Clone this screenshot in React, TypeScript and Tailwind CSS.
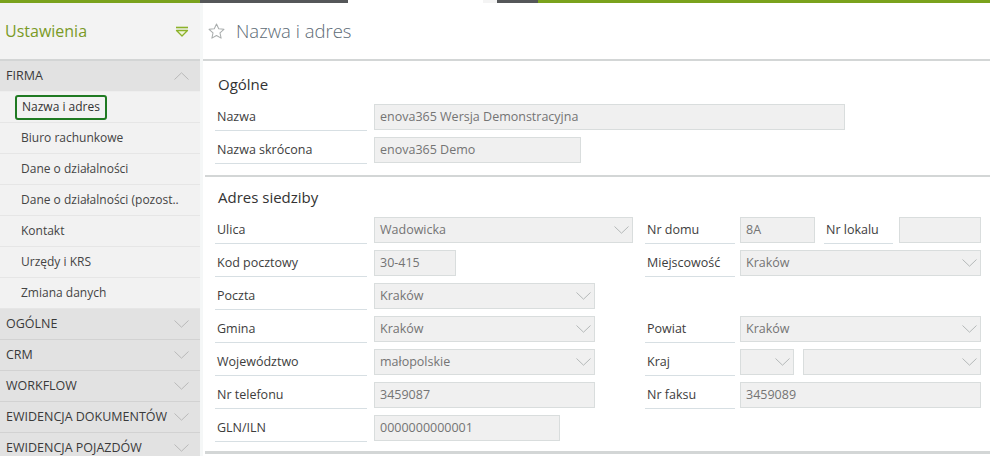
import React from "react";

const font = { fontFamily: '"Open Sans", "Noto Sans", sans-serif' };

function Chevron({ up = false, className = "" }: { up?: boolean; className?: string }) {
  return (
    <svg width="15" height="8" viewBox="0 0 15 8" className={className} fill="none">
      {up ? (
        <path d="M0.5 7.5 L7.5 0.8 L14.5 7.5" stroke="currentColor" strokeWidth="1" />
      ) : (
        <path d="M0.5 0.5 L7.5 7.2 L14.5 0.5" stroke="currentColor" strokeWidth="1" />
      )}
    </svg>
  );
}

function Label({ text, w = "w-[152px]" }: { text: string; w?: string }) {
  return (
    <div className={`${w} h-[29px] border-b border-[#d7dfe3] pl-[2px] pt-[6px] text-[12.5px] text-[#3d3d3d] shrink-0`}>
      {text}
    </div>
  );
}

function Input({ value = "", w, select = false }: { value?: string; w: string; select?: boolean }) {
  return (
    <div
      className={`${w} h-[26px] mt-[2px] bg-[#f0f0f0] border border-[#d9dddd] flex items-center justify-between pl-[5px] pr-[2px] text-[12.5px] text-[#747474] shrink-0`}
    >
      <span>{value}</span>
      {select && <Chevron className="text-[#b4b8b8] mr-[1px]" />}
    </div>
  );
}

function Row({ children }: { children: React.ReactNode }) {
  return <div className="flex h-[33px] items-start">{children}</div>;
}

export default function App() {
  const firmaItems = [
    "Nazwa i adres",
    "Biuro rachunkowe",
    "Dane o działalności",
    "Dane o działalności (pozost..",
    "Kontakt",
    "Urzędy i KRS",
    "Zmiana danych",
  ];
  const cats = ["OGÓLNE", "CRM", "WORKFLOW", "EWIDENCJA DOKUMENTÓW", "EWIDENCJA POJAZDÓW"];

  return (
    <div className="w-[990px] h-[456px] overflow-hidden bg-white" style={font}>
      {/* top strip */}
      <div className="flex h-[3px]">
        <div className="w-[200px] bg-[#7aa21c]" />
        <div className="w-[148px] bg-[#555759]" />
        <div className="w-[135px] bg-white" />
        <div className="w-[14px] bg-[#f4f4f4]" />
        <div className="w-[41px] bg-[#555759]" />
        <div className="flex-1 bg-[#7aa21c]" />
      </div>
      <div className="flex">
        {/* sidebar */}
        <div className="w-[200px] shrink-0 bg-[#f2f2f2]">
          <div className="h-[56px] flex items-center justify-between pl-[5px] pr-[11px] bg-[#f3f3f3]">
            <span className="text-[16px] text-[#7a9a26]">Ustawienia</span>
            <svg width="14" height="11" viewBox="0 0 14 11" fill="none">
              <path d="M1 1.5 H13" stroke="#8cb22a" strokeWidth="1.6" />
              <path d="M1.5 4.5 H12.5 L7 10 Z" stroke="#8cb22a" strokeWidth="1.3" fill="#eef4d8" strokeLinejoin="round" />
            </svg>
          </div>
          <div className="h-[2px] bg-[#d3d5d5]" />
          <div className="h-[31px] bg-[#e2e2e2] flex items-center justify-between pl-[6px] pr-[11px] border-b border-[#eeeeee]">
            <span className="text-[12.5px] text-[#3a3a3a]">FIRMA</span>
            <Chevron up className="text-[#b9b9b9]" />
          </div>
          {firmaItems.map((t, i) => (
            <div key={t} className="h-[31px] flex items-center border-b border-[#e6e6e6] pl-[15px] bg-[#f2f2f2]">
              {i === 0 ? (
                <span className="border-2 border-[#1f7a22] rounded-[3px] px-[5px] h-[25px] flex items-center text-[12px] text-[#333]">
                  {t}
                </span>
              ) : (
                <span className="pl-[6px] text-[12px] text-[#444]">{t}</span>
              )}
            </div>
          ))}
          {cats.map((c) => (
            <div key={c} className="h-[31px] bg-[#e2e2e2] flex items-center justify-between pl-[6px] pr-[11px] border-b border-[#d2d2d2]">
              <span className="text-[12.5px] text-[#3a3a3a]">{c}</span>
              <Chevron className="text-[#b9b9b9]" />
            </div>
          ))}
        </div>

        {/* main */}
        <div className="flex-1 bg-white border-l-[3px] border-[#f5f7f7]">
          <div className="h-[56px] flex items-center pl-[4px] gap-[10px]">
            <svg width="19" height="19" viewBox="0 0 24 24" fill="none" stroke="#a9adad" strokeWidth="1.3" strokeLinejoin="round">
              <path d="M12 2.5 L14.8 8.6 L21.4 9.3 L16.4 13.8 L17.8 20.4 L12 17 L6.2 20.4 L7.6 13.8 L2.6 9.3 L9.2 8.6 Z" />
            </svg>
            <span className="text-[18.5px] font-light text-[#5d6b76]">Nazwa i adres</span>
          </div>
          <div className="h-[2px] bg-[#d3d6d6]" />

          {/* Ogólne */}
          <div className="pl-[2px]">
            <div className="pl-[13px] h-[41px] pt-[12px] text-[15px] text-[#333]">Ogólne</div>
            <div className="pl-[10px]">
              <Row>
                <Label text="Nazwa" />
                <div className="w-[7px]" />
                <Input w="w-[471px]" value="enova365 Wersja Demonstracyjna" />
              </Row>
              <Row>
                <Label text="Nazwa skrócona" />
                <div className="w-[7px]" />
                <Input w="w-[207px]" value="enova365 Demo" />
              </Row>
            </div>
            <div className="h-[7px]" />
            <div className="h-[2px] bg-[#d3d6d6]" />

            {/* Adres */}
            <div className="pl-[13px] h-[38px] pt-[9px] text-[15px] text-[#333]">Adres siedziby</div>
            <div className="pl-[10px]">
              <Row>
                <div className="w-[430px] flex shrink-0">
                  <Label text="Ulica" />
                  <div className="w-[7px]" />
                  <Input w="w-[259px]" value="Wadowicka" select />
                </div>
                <Label text="Nr domu" w="w-[90px]" />
                <div className="w-[5px]" />
                <Input w="w-[75px]" value="8A" />
                <div className="w-[9px]" />
                <Label text="Nr lokalu" w="w-[69px]" />
                <div className="w-[6px]" />
                <Input w="w-[82px]" />
              </Row>
              <Row>
                <div className="w-[430px] flex shrink-0">
                  <Label text="Kod pocztowy" />
                  <div className="w-[7px]" />
                  <Input w="w-[82px]" value="30-415" />
                </div>
                <Label text="Miejscowość" w="w-[90px]" />
                <div className="w-[5px]" />
                <Input w="w-[241px]" value="Kraków" select />
              </Row>
              <Row>
                <div className="w-[430px] flex shrink-0">
                  <Label text="Poczta" />
                  <div className="w-[7px]" />
                  <Input w="w-[221px]" value="Kraków" select />
                </div>
              </Row>
              <Row>
                <div className="w-[430px] flex shrink-0">
                  <Label text="Gmina" />
                  <div className="w-[7px]" />
                  <Input w="w-[221px]" value="Kraków" select />
                </div>
                <Label text="Powiat" w="w-[90px]" />
                <div className="w-[5px]" />
                <Input w="w-[241px]" value="Kraków" select />
              </Row>
              <Row>
                <div className="w-[430px] flex shrink-0">
                  <Label text="Województwo" />
                  <div className="w-[7px]" />
                  <Input w="w-[221px]" value="małopolskie" select />
                </div>
                <Label text="Kraj" w="w-[90px]" />
                <div className="w-[5px]" />
                <Input w="w-[54px]" select />
                <div className="w-[9px]" />
                <Input w="w-[178px]" select />
              </Row>
              <Row>
                <div className="w-[430px] flex shrink-0">
                  <Label text="Nr telefonu" />
                  <div className="w-[7px]" />
                  <Input w="w-[221px]" value="3459087" />
                </div>
                <Label text="Nr faksu" w="w-[90px]" />
                <div className="w-[5px]" />
                <Input w="w-[241px]" value="3459089" />
              </Row>
              <Row>
                <div className="w-[430px] flex shrink-0">
                  <Label text="GLN/ILN" />
                  <div className="w-[7px]" />
                  <Input w="w-[186px]" value="0000000000001" />
                </div>
              </Row>
            </div>
            <div className="h-[5px]" />
            <div className="h-[3px] bg-[#d3d6d6]" />
          </div>
        </div>
      </div>
    </div>
  );
}
